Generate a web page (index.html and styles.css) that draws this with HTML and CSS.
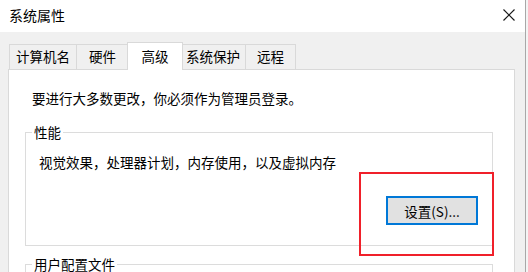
FILE: index.html
```html
<!DOCTYPE html>
<html lang="zh-CN">
<head>
<meta charset="utf-8">
<title>系统属性</title>
<link rel="stylesheet" href="styles.css">
</head>
<body>
<div class="window">
  <div class="titlebar">
    <span class="title">系统属性</span>
    <span class="close" aria-label="关闭">
      <svg width="12" height="12" viewBox="0 0 12 12"><path d="M0.5 0.5 L11.5 11.5 M11.5 0.5 L0.5 11.5" stroke="#1a1a1a" stroke-width="1.2" fill="none"/></svg>
    </span>
  </div>
  <div class="content">
    <div class="tabs">
      <div class="tab tab-first t1">计算机名</div>
      <div class="tab t2">硬件</div>
      <div class="tab tab-selected">高级</div>
      <div class="tab t4">系统保护</div>
      <div class="tab t5">远程</div>
    </div>
    <div class="panel">
      <p class="intro">要进行大多数更改，你必须作为管理员登录。</p>
      <fieldset class="group group-perf">
        <legend>性能</legend>
        <p class="desc">视觉效果，处理器计划，内存使用，以及虚拟内存</p>
        <div class="actions">
          <button class="btn btn-default">设置(S)...</button>
        </div>
      </fieldset>
      <fieldset class="group group-profile">
        <legend>用户配置文件</legend>
      </fieldset>
    </div>
  </div>
  <div class="highlight"></div>
</div>
</body>
</html>
```

FILE: styles.css
```css
html, body {
  margin: 0;
  padding: 0;
}
body {
  width: 528px;
  height: 272px;
  overflow: hidden;
  background: #f4f4f4;
  font-family: "Noto Sans CJK SC", "Noto Sans", sans-serif;
  font-size: 13.5px;
  color: #000;
}
.window {
  position: relative;
  width: 525px;
  height: 272px;
  border-right: 1px solid #a8a8a8;
  background: #f0f0f0;
  overflow: hidden;
}
.titlebar {
  height: 32px;
  background: #fff;
  display: flex;
  align-items: center;
  justify-content: space-between;
  padding: 0 10px 2px 9px;
  box-sizing: border-box;
}
.title {
  font-size: 14px;
  line-height: 18px;
  color: #000;
}
.close {
  display: flex;
  width: 12px;
  height: 12px;
}
.content {
  padding: 12px 0 0 8px;
}
.tabs {
  display: flex;
  height: 25px;
  margin-left: 1px;
  position: relative;
  z-index: 2;
}
.tab {
  box-sizing: border-box;
  height: 25px;
  border-top: 1px solid #d9d9d9;
  border-right: 1px solid #d9d9d9;
  background: #f0f0f0;
  text-align: center;
  line-height: 23px;
  white-space: nowrap;
  color: #000;
}
.tab-first {
  border-left: 1px solid #d9d9d9;
}
.t1 { width: 68px; }
.t2 { width: 52px; }
.t4 { width: 65px; position: relative; z-index: 1; }
.t5 { width: 50px; }
.tab-selected {
  width: 56px;
  height: 28px;
  margin: -2px -2px 0 -2px;
  background: #fff;
  border-left: 1px solid #d9d9d9;
  line-height: 26px;
  position: relative;
  z-index: 3;
}
.panel {
  box-sizing: border-box;
  width: 507px;
  height: 220px;
  background: #fff;
  border: 1px solid #d9d9d9;
  padding: 19px 21px 0 16px;
}
.intro {
  margin: 0 0 17px 7px;
  line-height: 18px;
}
.group {
  margin: 0;
  padding: 0 14px 0 13px;
  border: 1px solid #dcdcdc;
  min-width: 0;
}
.group legend {
  margin-left: -7px;
  padding: 0 2px;
  line-height: 16px;
}
.group-perf {
  height: 122px;
  box-sizing: border-box;
  display: flex;
  flex-direction: column;
}
.desc {
  margin: 13px 0 0 0;
  line-height: 18px;
}
.actions {
  display: flex;
  justify-content: flex-end;
  margin-top: 25px;
}
.btn {
  font-family: inherit;
  font-size: 13.5px;
  color: #000;
  width: 92px;
  height: 29px;
  padding: 0;
  background: #e1e1e1;
  border: 2px solid #0078d7;
  box-sizing: border-box;
}
.group-profile {
  margin-top: 11px;
  height: 40px;
  box-sizing: border-box;
}
.group-profile legend {
  line-height: 14px;
}
.highlight {
  position: absolute;
  left: 359px;
  top: 172px;
  width: 135px;
  height: 84px;
  box-sizing: border-box;
  border: 2px solid #f0202a;
  z-index: 5;
}
```
